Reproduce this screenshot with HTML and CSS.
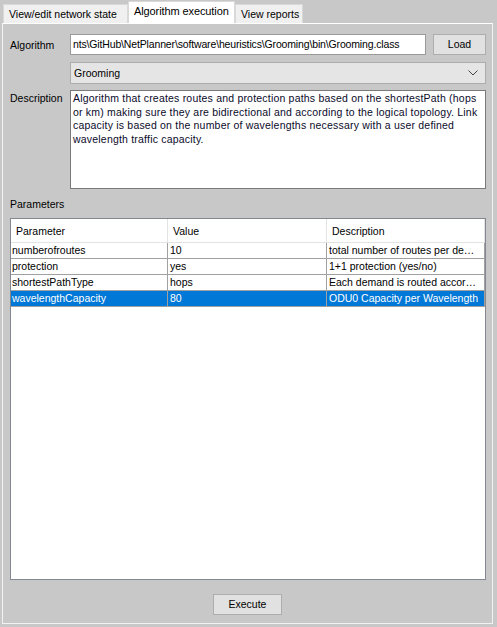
FILE: index.html
```html
<!DOCTYPE html>
<html>
<head>
<meta charset="utf-8">
<link rel="stylesheet" href="styles.css">
</head>
<body>
<div class="tabs">
  <div class="tab">View/edit network state</div>
  <div class="tab active">Algorithm execution</div>
  <div class="tab">View reports</div>
</div>
<div class="panel">
  <div class="row r1">
    <div class="label">Algorithm</div>
    <div class="field path">nts\GitHub\NetPlanner\software\heuristics\Grooming\bin\Grooming.class</div>
    <div class="btn load">Load</div>
  </div>
  <div class="row r2">
    <div class="label"></div>
    <div class="combo"><span>Grooming</span>
      <svg width="10" height="6" viewBox="0 0 10 6"><path d="M0.5 0.5 L5 5 L9.5 0.5" fill="none" stroke="#444" stroke-width="1"/></svg>
    </div>
  </div>
  <div class="row r3">
    <div class="label desc-label">Description</div>
    <div class="textarea">Algorithm that creates routes and protection paths based on the shortestPath (hops or km) making sure they are bidirectional and according to the logical topology. Link capacity is based on the number of wavelengths necessary with a user defined wavelength traffic capacity.</div>
  </div>
  <div class="params-label">Parameters</div>
  <div class="table">
    <div class="trow head">
      <div class="c c1">Parameter</div>
      <div class="c c2">Value</div>
      <div class="c c3">Description</div>
    </div>
    <div class="trow">
      <div class="c c1">numberofroutes</div>
      <div class="c c2">10</div>
      <div class="c c3">total number of routes per de…</div>
    </div>
    <div class="trow">
      <div class="c c1">protection</div>
      <div class="c c2">yes</div>
      <div class="c c3">1+1 protection (yes/no)</div>
    </div>
    <div class="trow">
      <div class="c c1">shortestPathType</div>
      <div class="c c2">hops</div>
      <div class="c c3">Each demand is routed accor…</div>
    </div>
    <div class="trow sel">
      <div class="c c1">wavelengthCapacity</div>
      <div class="c c2">80</div>
      <div class="c c3">ODU0 Capacity per Wavelength</div>
    </div>
  </div>
  <div class="footer">
    <div class="btn exec">Execute</div>
  </div>
</div>
</body>
</html>
```
FILE: styles.css
```css
* { box-sizing: border-box; }
html, body {
  margin: 0;
  padding: 0;
}
body {
  background: #c8c8c8;
  font-family: "Liberation Sans", Arial, sans-serif;
  font-size: 10.5px;
  letter-spacing: 0;
  color: #000;
  width: 497px;
  height: 627px;
  overflow: hidden;
}
.tabs {
  display: flex;
  align-items: flex-end;
  height: 23px;
  padding-left: 3px;
}
.tab {
  height: 19px;
  padding: 0 5px;
  line-height: 18px;
  background: #f0f0f0;
  border: 1px solid #d9d9d9;
  border-bottom: none;
  white-space: nowrap;
}
.tab:first-child { width: 125px; }
.tab.active {
  height: 22px;
  width: 107px;
  background: #fff;
  border-color: #d9d9d9;
  line-height: 19px;
  font-size: 11px;
  letter-spacing: -0.1px;
}
.tab:last-child { width: 68px; }
.panel {
  margin: 0 4px 0 2px;
  height: 601px;
  border: 1px solid #f2f2f2;
  border-top-color: #fff;
  padding: 10px 6px 0 7px;
  display: flex;
  flex-direction: column;
}
.row {
  display: flex;
  align-items: flex-start;
}
.label {
  width: 60px;
  flex: none;
}
.r1 { height: 21px; align-items: center; }
.field {
  height: 21px;
  background: #fff;
  border: 1px solid #9a9a9a;
  width: 356px;
  line-height: 19px;
  padding-left: 2px;
  white-space: nowrap;
  overflow: hidden;
  letter-spacing: -0.15px;
}
.btn {
  background: #e1e1e1;
  border: 1px solid #adadad;
  text-align: center;
}
.load {
  width: 53px;
  height: 21px;
  line-height: 19px;
  margin-left: 7px;
}
.r2 { margin-top: 7px; }
.combo {
  width: 416px;
  height: 22px;
  background: #e5e5e5;
  border: 1px solid #acacac;
  display: flex;
  align-items: center;
  justify-content: space-between;
  padding: 0 7px 0 3px;
}
.r3 { margin-top: 6px; }
.desc-label { padding-top: 2px; }
.textarea {
  width: 416px;
  height: 99px;
  background: #fff;
  border: 1px solid #7a7a7a;
  padding: 1px 4px 1px 2px;
  line-height: 13.7px;
  color: #0a0a2a;
  letter-spacing: 0.2px;
}
.params-label {
  margin-top: 8px;
  height: 21px;
  line-height: 14px;
}
.table {
  width: 476px;
  height: 362px;
  background: #fff;
  border: 1px solid #828790;
}
.trow {
  display: flex;
  height: 16px;
  line-height: 15px;
  border-bottom: 1px solid #a0a0a0;
}
.trow.head {
  height: 24px;
  line-height: 24px;
  border-bottom: 1px solid #e3e3e3;
}
.c {
  white-space: nowrap;
  overflow: hidden;
  padding-left: 1px;
  border-right: 1px solid #a0a0a0;
}
.head .c {
  padding-left: 5px;
  border-right: 1px solid #e3e3e3;
}
.c1 { width: 157px; }
.c2 { width: 159px; padding-left: 2px; }
.c3 { width: 158px; padding-left: 2px; }
.sel { background: #0078d7; color: #fff; }
.footer {
  display: flex;
  justify-content: center;
  margin-top: 14px;
  padding-right: 1px;
}
.exec {
  width: 69px;
  height: 21px;
  line-height: 19px;
}
```
